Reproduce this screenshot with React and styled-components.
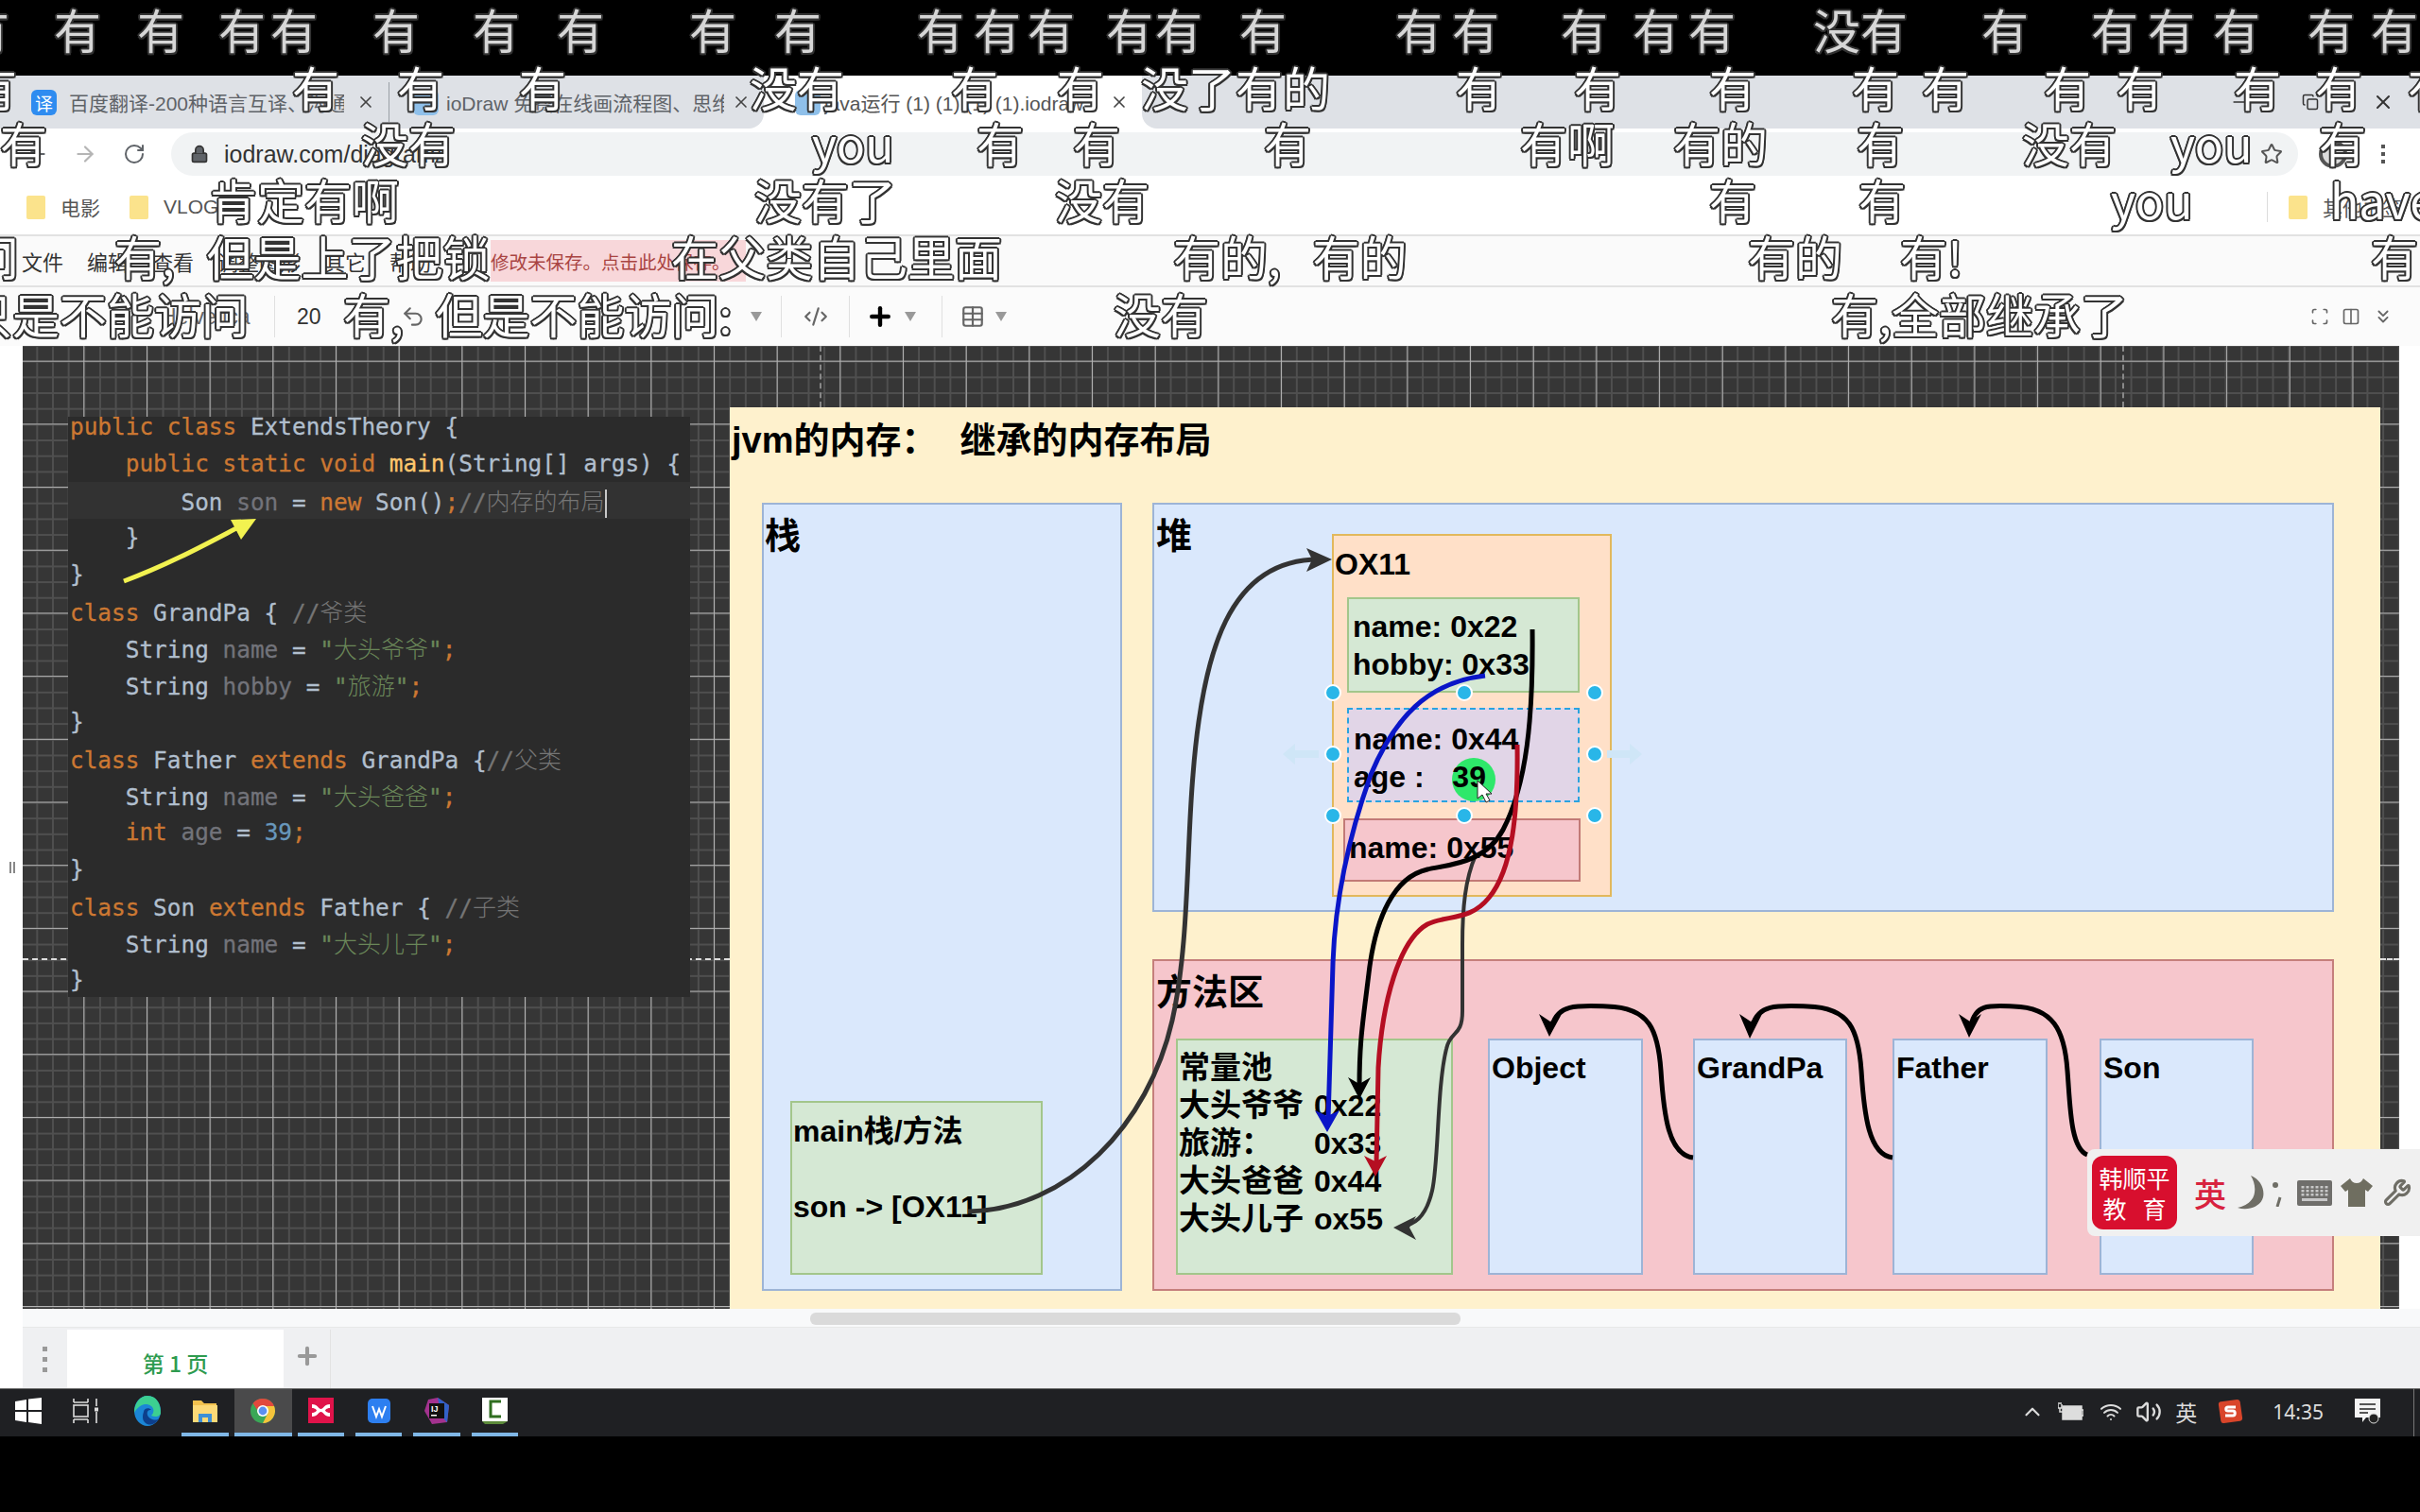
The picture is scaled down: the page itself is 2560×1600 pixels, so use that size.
import React from "react";
import styled, { createGlobalStyle } from "styled-components";
import {
	ArrowLeft,
	ArrowRight,
	RotateCw,
	Lock,
	Star,
	X,
	Minus,
	Copy,
	Undo2,
	CodeXml,
	Plus,
	Table,
	Columns2,
	ChevronsDown,
	ChevronUp,
	Scan,
	Volume2,
	Wifi,
	Wrench,
} from "lucide-react";

const CJK = '"Noto Sans CJK SC", sans-serif';
const UI = '"Liberation Sans", "Noto Sans CJK SC", sans-serif';

const GlobalStyle = createGlobalStyle`
	html, body {
		margin: 0;
		padding: 0;
		background: #000;
		overflow: hidden;
	}
	* { box-sizing: border-box; }
`;

const Screen = styled.div`
	position: relative;
	width: 2560px;
	height: 1600px;
	display: flex;
	flex-direction: column;
	overflow: hidden;
	font-family: ${UI};
	background: #000;
`;

const BlackBand = styled.div`
	height: ${(p) => p.$h}px;
	flex: none;
	background: #000;
`;

/* browser chrome */
const TabStrip = styled.div`
	height: 56px;
	flex: none;
	display: flex;
	background: #fff;
`;

const TabGroup = styled.div`
	display: flex;
	align-items: center;
	background: #dee1e6;
	border-bottom-left-radius: ${(p) => (p.$after ? 16 : 0)}px;
	border-bottom-right-radius: ${(p) => (p.$before ? 16 : 0)}px;
	flex: ${(p) => (p.$after ? 1 : "none")};
	justify-content: ${(p) => (p.$after ? "flex-end" : "flex-start")};
	padding-left: ${(p) => (p.$before ? 24 : 0)}px;
`;

const BrowserTab = styled.div`
	width: ${(p) => p.$w}px;
	height: 42px;
	display: flex;
	align-items: center;
	padding-left: ${(p) => p.$pl}px;
	gap: ${(p) => p.$gap}px;
	font-size: 21px;
	color: #5f6368;
	white-space: nowrap;
	border-right: ${(p) => (p.$sep ? "1px solid #9aa0a6" : "none")};
	flex: none;
`;

const ActiveTab = styled(BrowserTab)`
	height: 56px;
	background: #fff;
	color: #555;
`;

const TabTitle = styled.span`
	flex: 1;
	overflow: hidden;
`;

const TabClose = styled.span`
	display: flex;
	color: #444;
	margin-right: 14px;
`;

const Favicon = styled.span`
	width: 27px;
	height: 27px;
	flex: none;
	border-radius: 6px;
	background: ${(p) => p.$bg};
	color: #fff;
	font-size: 19px;
	display: flex;
	align-items: center;
	justify-content: center;
`;

const WindowControls = styled.div`
	display: flex;
	align-items: center;
	gap: 56px;
	padding-right: 27px;
	color: #333;
`;

const AddressRow = styled.div`
	height: 54px;
	flex: none;
	display: flex;
	align-items: center;
	background: #fff;
	color: #5f6368;
	padding-left: 26px;
`;

const NavIcon = styled.span`
	display: flex;
	margin-left: ${(p) => p.$ml}px;
`;

const Omnibox = styled.div`
	width: 2250px;
	height: 46px;
	margin-left: 27px;
	border-radius: 23px;
	background: #f1f3f4;
	display: flex;
	align-items: center;
	padding-left: 20px;
	padding-right: 16px;
	font-size: 25px;
	color: #333;
`;

const Url = styled.span`
	margin-left: 16px;
	flex: 1;
`;

const Avatar = styled.span`
	width: 30px;
	height: 30px;
	border-radius: 50%;
	margin-left: 22px;
	border: 4px solid #555;
	background: #ddd;
	flex: none;
`;

const DotsV = styled.span`
	margin-left: 36px;
	display: flex;
	flex-direction: column;
	gap: 4px;
	i {
		width: 4px;
		height: 4px;
		background: #555;
		display: block;
	}
`;

const BookmarkRow = styled.div`
	height: 58px;
	flex: none;
	display: flex;
	align-items: center;
	background: #fff;
	font-size: 21px;
	color: #555;
`;

const Bookmark = styled.div`
	display: flex;
	align-items: center;
	gap: 16px;
	margin-left: ${(p) => p.$ml}px;
`;

const FolderMark = styled.span`
	width: 20px;
	height: 25px;
	border-radius: 2px;
	background: #fbe38c;
	display: block;
`;

const BookmarkEnd = styled.div`
	margin-left: auto;
	display: flex;
	align-items: center;
	gap: 16px;
	border-left: 1px solid #ddd;
	padding-left: 22px;
	width: 162px;
	height: 32px;
`;

/* editor */
const MenuBar = styled.div`
	height: 56px;
	flex: none;
	display: flex;
	align-items: center;
	gap: 25px;
	padding-left: 23px;
	background: #fafafa;
	border-top: 2px solid #e2e2e2;
	border-bottom: 2px solid #e2e2e2;
	font-size: 22px;
	color: #333;
`;

const Notice = styled.div`
	margin-left: 38px;
	width: 270px;
	height: 44px;
	display: flex;
	align-items: center;
	background: #f8d7da;
	color: #a94442;
	font-size: 19.5px;
	white-space: nowrap;
	overflow: hidden;
`;

const Toolbar = styled.div`
	height: 62px;
	flex: none;
	display: flex;
	align-items: center;
	background: #fbfbfb;
	color: #666;
	font-size: 23px;
`;

const ToolItem = styled.span`
	display: flex;
	align-items: center;
	width: ${(p) => (p.$w ? `${p.$w}px` : "auto")};
	margin-left: ${(p) => p.$ml}px;
	color: ${(p) => p.$c || "#666"};
	overflow: hidden;
`;

const ToolSep = styled.span`
	width: 1px;
	height: 44px;
	background: #e0e0e0;
	margin-left: ${(p) => p.$ml}px;
`;

const Caret = styled.span`
	width: 0;
	height: 0;
	margin-left: ${(p) => p.$ml}px;
	border-left: 6px solid transparent;
	border-right: 6px solid transparent;
	border-top: 10px solid #999;
`;

const ToolRight = styled.div`
	margin-left: auto;
	display: flex;
	align-items: center;
	gap: 13px;
	padding-right: 28px;
	color: #666;
`;

const EditorRow = styled.div`
	flex: none;
	height: 1103px;
	display: flex;
	background: #fff;
`;

const LeftStrip = styled.div`
	width: 24px;
	flex: none;
	background: #fff;
	position: relative;
`;

const Grip = styled.span`
	position: absolute;
	left: 10px;
	top: 546px;
	width: 6px;
	height: 12px;
	border-left: 2px solid #888;
	border-right: 2px solid #888;
`;

const EditorMain = styled.div`
	flex: 1;
	display: flex;
	flex-direction: column;
`;

const CanvasRow = styled.div`
	position: relative;
	height: 1019px;
	flex: none;
	display: flex;
	background: #fff;
`;

const Canvas = styled.div`
	position: relative;
	width: 2514px;
	flex: none;
	overflow: hidden;
	background-color: #363636;
	background-image: linear-gradient(to right, #b4b4b4 1px, transparent 1px),
		linear-gradient(to bottom, #b4b4b4 1px, transparent 1px),
		linear-gradient(to right, #4f4f4f 2px, transparent 2px),
		linear-gradient(to bottom, #4f4f4f 2px, transparent 2px);
	background-size: 66.68px 100%, 100% 66.7px, 16.67px 100%, 100% 16.675px;
	background-position: 64.3px 0, 0 15.7px, 64.3px 0, 0 15.7px;
`;

const PageBreakH = styled.div`
	position: absolute;
	left: ${(p) => p.$x}px;
	top: 648px;
	width: ${(p) => p.$w}px;
	border-top: 2px dashed #ddd;
`;

const PageBreakV = styled.div`
	position: absolute;
	left: ${(p) => p.$x}px;
	top: 0;
	height: 65px;
	border-left: 2px dashed #888;
`;

/* code picture */
const CodePanel = styled.div`
	position: absolute;
	left: 48px;
	top: 75px;
	width: 658px;
	height: 614px;
	background: #2b2b2b;
	overflow: hidden;
	font-family: "DejaVu Sans Mono", "Noto Sans CJK SC", monospace;
	font-size: 24.4px;
	color: #b1bfce;
	-webkit-text-stroke: 0.3px;
`;

const CodeLines = styled.div`
	margin-top: -9px;
`;

const CodeLine = styled.div`
	height: 39px;
	line-height: 39px;
	white-space: pre;
	padding-left: 2px;
	background: ${(p) => (p.$current ? "#323232" : "transparent")};
`;

const Kw = styled.span`
	color: #cc7832;
`;
const Fn = styled.span`
	color: #ffc66d;
`;
const Var = styled.span`
	color: #72737a;
`;
const Str = styled.span`
	color: #6a8759;
`;
const Num = styled.span`
	color: #6897bb;
`;
const Cmt = styled.span`
	color: #757575;
`;
const Cn = styled.span`
	font-family: ${CJK};
	font-size: 25px;
	font-weight: 300;
	-webkit-text-stroke: 0;
`;
const TextCaret = styled.span`
	display: inline-block;
	width: 2px;
	height: 30px;
	background: #c8c8c8;
	vertical-align: middle;
`;

/* diagram */
const DiagramPage = styled.div`
	position: absolute;
	left: 748px;
	top: 65px;
	width: 1746px;
	height: 954px;
	background: #fef1cd;
	padding: 12px 2px;
	color: #000;
	font-family: ${UI};
	font-weight: 700;
`;

const PageTitle = styled.div`
	font-size: 38px;
	line-height: 46px;
	white-space: pre;
	word-spacing: 1.5px;
`;

const TONES = {
	blue: ["#dae8fc", "#9db4d6"],
	pink: ["#f6c6cc", "#c57f7c"],
	green: ["#d5e8d4", "#a3c68b"],
	peach: ["#ffe0c8", "#e2b85c"],
	purple: ["#e1d5e7", "#29a3e0"],
	red: ["#f6c6cc", "#c27a77"],
};

const Node = styled.div`
	position: absolute;
	left: ${(p) => p.$x}px;
	top: ${(p) => p.$y}px;
	width: ${(p) => p.$w}px;
	height: ${(p) => p.$h}px;
	background: ${(p) => TONES[p.$tone][0]};
	border: 2px ${(p) => (p.$dashed ? "dashed" : "solid")} ${(p) => TONES[p.$tone][1]};
	padding: ${(p) => p.$pt || 0}px 0 0 ${(p) => p.$pl || 0}px;
	font-size: 32px;
	line-height: 40px;
	white-space: pre;
`;

const AreaLabel = styled.div`
	font-size: 38px;
	line-height: 46px;
`;

const PoolRow = styled.div`
	display: flex;
	height: 40px;
`;

const PoolLabel = styled.span`
	width: 143px;
	font-size: 33px;
	flex: none;
`;

const Ping = styled.span`
	position: absolute;
	left: 109px;
	top: 51px;
	width: 46px;
	height: 46px;
	border-radius: 50%;
	background: #2ee86a;
`;

const NodeText = styled.div`
	position: relative;
`;

const AgeValue = styled.span`
	margin-left: 3px;
`;

const Overlay = styled.svg`
	position: absolute;
	left: 0;
	top: 0;
	width: 2514px;
	height: 1019px;
	pointer-events: none;
`;

/* input method floating bar */
const ImeBar = styled.div`
	position: absolute;
	left: 2184px;
	top: 850px;
	width: 352px;
	height: 92px;
	background: #f0f0f0;
	border-radius: 8px 0 0 8px;
	display: flex;
	align-items: center;
	padding-left: 5px;
	color: #6f6e66;
`;

const ImeLogo = styled.div`
	width: 90px;
	height: 78px;
	border-radius: 12px;
	background: #d80f2e;
	color: #fff;
	font-family: ${CJK};
	font-size: 25px;
	line-height: 32px;
	text-align: center;
	padding-top: 7px;
	flex: none;
	white-space: pre;
`;

const ImeLang = styled.span`
	color: #d8233f;
	font-family: ${CJK};
	font-size: 34px;
	font-weight: 500;
	margin-left: 18px;
`;

const ImeIcon = styled.span`
	display: flex;
	margin-left: ${(p) => p.$ml}px;
`;

const RightStrip = styled.div`
	flex: 1;
	background: #fff;
`;

const ScrollRow = styled.div`
	height: 20px;
	flex: none;
	background: #f8f9fa;
	padding: 4px 0 0 833px;
	border-bottom: 1px solid #e8e8e8;
`;

const ScrollThumb = styled.div`
	width: 688px;
	height: 13px;
	background: #dadada;
	border-radius: 6px;
`;

const PageTabs = styled.div`
	height: 64px;
	flex: none;
	display: flex;
	background: #eff0f2;
	padding-top: 2px;
`;

const PageDots = styled.div`
	width: 47px;
	display: flex;
	flex-direction: column;
	align-items: center;
	justify-content: center;
	gap: 6px;
	i {
		width: 5px;
		height: 5px;
		background: #999;
		display: block;
	}
`;

const PageTab = styled.div`
	width: 229px;
	background: #fff;
	color: #2e9b4f;
	font-family: ${CJK};
	font-size: 23px;
	font-weight: 500;
	display: flex;
	align-items: center;
	justify-content: center;
	padding-top: 8px;
`;

const PageAdd = styled.div`
	width: 50px;
	color: #999;
	display: flex;
	justify-content: center;
	padding-top: 14px;
	border-right: 1px solid #e3e3e3;
`;

/* taskbar */
const TaskBar = styled.div`
	height: 51px;
	flex: none;
	display: flex;
	background: #1f2023;
	border-top: 1px solid #6b6b6b;
	color: #e6e6e6;
`;

const TaskSlot = styled.div`
	position: relative;
	width: ${(p) => p.$w || 61.3}px;
	margin-left: ${(p) => p.$ml || 0}px;
	flex: none;
	display: flex;
	align-items: center;
	justify-content: center;
	padding-bottom: 5px;
	background: ${(p) => (p.$active ? "#4a4a4b" : "transparent")};
	&::after {
		content: "";
		display: ${(p) => (p.$open ? "block" : "none")};
		position: absolute;
		bottom: 0;
		left: ${(p) => (p.$active ? 0 : 6)}px;
		right: ${(p) => (p.$active ? 0 : 6)}px;
		height: 4px;
		background: #7fb7e6;
	}
`;

const Tray = styled.div`
	margin-left: auto;
	display: flex;
	align-items: center;
	padding-right: 41px;
	padding-bottom: 3px;
	border-right: 1px solid transparent;
`;

const TrayItem = styled.span`
	display: flex;
	margin-left: ${(p) => p.$ml}px;
	font-size: ${(p) => p.$fs || 22}px;
	font-family: ${(p) => (p.$cn ? CJK : '"Noto Sans", sans-serif')};
	color: #dcdcdc;
`;

const TrayEdge = styled.span`
	position: absolute;
	left: 2553px;
	top: 1469px;
	width: 1px;
	height: 51px;
	background: #777;
`;

/* bullet comments, over everything */
const Danmaku = styled.span`
	position: absolute;
	left: ${(p) => p.$x}px;
	top: ${(p) => p.$y - 32}px;
	font-family: ${CJK};
	font-size: 50px;
	line-height: 58px;
	white-space: pre;
	color: ${(p) => (p.$y < 60 ? "#d6d6d6" : "#fff")};
	text-shadow: -2px 0 0 #333, 2px 0 0 #333, 0 -2px 0 #333, 0 2px 0 #333, -1.5px -1.5px 0 #333,
		1.5px -1.5px 0 #333, -1.5px 1.5px 0 #333, 1.5px 1.5px 0 #333;
`;

const has = "有";
const DANMAKU = [
	[33, [[-40, has], [57, has], [145, has], [231, has], [286, has], [394, has], [500, has], [589, has], [729, has], [819, has], [970, has], [1030, has], [1087, has], [1170, has], [1222, has], [1311, has], [1476, has], [1536, has], [1651, has], [1727, has], [1786, has], [1918, "没有"], [2096, has], [2212, has], [2272, has], [2341, has], [2441, has], [2508, has]]],
	[94, [[-32, has], [309, has], [420, has], [549, has], [793, "没有"], [1006, has], [1118, has], [1207, "没了有的"], [1540, has], [1665, has], [1808, has], [1959, has], [2033, has], [2162, has], [2239, has], [2363, has], [2449, has], [2547, has]]],
	[153, [[0, has], [382, "没有"], [859, "you"], [1033, has], [1135, has], [1337, has], [1608, "有啊"], [1770, "有的"], [1964, has], [2139, "没有"], [2296, "you"], [2453, has]]],
	[213, [[222, "肯定有啊"], [798, "没有了"], [1116, "没有"], [1808, has], [1966, has], [2233, "you"], [2465, "have"]]],
	[273, [[-30, "问"], [121, "有,   但是上了把锁"], [710, "在父类自己里面"], [1241, "有的,   有的"], [1849, "有的"], [2010, "有!"], [2508, has]]],
	[334, [[-37, "只是不能访问"], [363, "有,   但是不能访问:"], [1178, "没有"], [1937, "有,全部继承了"]]],
];

const Arrowhead = ({ points, fill }) => <polygon points={points} fill={fill} />;

const WindowsLogo = () => (
	<svg width='28' height='28' viewBox='0 0 28 28'>
		<polygon points='0,4 12,2 12,13 0,13' fill='#fff' />
		<polygon points='14,1.6 28,0 28,13 14,13' fill='#fff' />
		<polygon points='0,15 12,15 12,26 0,24' fill='#fff' />
		<polygon points='14,15 28,15 28,28 14,26' fill='#fff' />
	</svg>
);

const TaskViewIcon = () => (
	<svg width='28' height='28' viewBox='0 0 28 28' fill='none' stroke='#ddd' strokeWidth='1.6'>
		<rect x='2' y='8' width='15' height='12' />
		<path d='M2 5V1M17 5V1M2 5H17M2 23H17M2 27V23M17 27V23M26 1V9M26 15V27' />
		<rect x='24' y='10.5' width='4' height='4' fill='#ddd' stroke='none' />
	</svg>
);

const EdgeIcon = () => (
	<svg width='28' height='32' viewBox='0 0 28 32'>
		<ellipse cx='14' cy='16' rx='14' ry='16' fill='#1b86d6' />
		<path d='M14 0C24 0 28 9 28 18C28 22 22 23 18 21C24 15 18 8 11 9C6 10 2 14 0 18C0 8 6 0 14 0Z' fill='#3ccf91' />
		<path d='M10 17C10 13 16 12 18 15C13 14 12 21 17 24C21 26 24 26 26 24C23 30 16 33 11 28C8 25 9 20 10 17Z' fill='#0d3f8c' />
	</svg>
);

const ExplorerIcon = () => (
	<svg width='26' height='26' viewBox='0 0 26 26'>
		<path d='M0 2H9L12 5H25V8H0Z' fill='#f2c14e' />
		<rect x='0' y='7' width='26' height='18' fill='#fcd977' />
		<path d='M6 25V16H20V25H16V20H10V25Z' fill='#3d8fd6' />
	</svg>
);

const ChromeIcon = () => (
	<svg width='26' height='28' viewBox='0 0 26 28'>
		<circle cx='13' cy='14' r='13' fill='#3aa757' />
		<path d='M13 1A13 13 0 0 1 25 9H13A6 6 0 0 0 7 13L2.6 6A13 13 0 0 1 13 1Z' fill='#e2483d' />
		<path d='M25 9A13 13 0 0 1 13 27L18 17A6 6 0 0 0 13 9Z' fill='#f5c33b' />
		<circle cx='13' cy='14' r='6' fill='#fff' />
		<circle cx='13' cy='14' r='4.4' fill='#5b8ff0' />
	</svg>
);

const XmindIcon = () => (
	<svg width='27' height='27' viewBox='0 0 27 27'>
		<rect width='27' height='27' fill='#e0134a' />
		<path d='M4 7C10 7 11 12 13.5 12C16 12 17 7 23 7V11C19 11 18 13.5 18 13.5C18 13.5 19 16 23 16V20C17 20 16 15 13.5 15C11 15 10 20 4 20V16C8 16 9 13.5 9 13.5C9 13.5 8 11 4 11Z' fill='#fff' />
	</svg>
);

const WpsIcon = () => (
	<svg width='24' height='26' viewBox='0 0 24 26'>
		<rect width='24' height='26' rx='5' fill='#2d7ff0' />
		<path d='M5 8L9 19L12 11L15 19L19 8' fill='none' stroke='#fff' strokeWidth='2' />
	</svg>
);

const IdeaIcon = () => (
	<svg width='26' height='28' viewBox='0 0 26 28'>
		<polygon points='4,2 14,0 26,8 24,26 8,28 0,14' fill='#a3328f' />
		<polygon points='14,0 26,8 24,26 18,20' fill='#3162c9' />
		<rect x='5' y='6' width='16' height='16' fill='#111' />
		<text x='7' y='15' fontSize='9' fontFamily='"Liberation Sans"' fontWeight='700' fill='#fff'>
			IJ
		</text>
		<rect x='7' y='18' width='6' height='1.5' fill='#fff' />
	</svg>
);

const CamtasiaIcon = () => (
	<svg width='27' height='28' viewBox='0 0 27 28'>
		<rect width='27' height='25' fill='#fff' />
		<polygon points='0,25 27,25 22,28 3,28' fill='#5c8a3a' />
		<path d='M20 4H9V20H20' fill='none' stroke='#2f6e20' strokeWidth='3' />
	</svg>
);

const BatteryIcon = () => (
	<svg width='27' height='20' viewBox='0 0 27 20' fill='none' stroke='#ddd' strokeWidth='1.5'>
		<rect x='5' y='4' width='20' height='14' fill='#ddd' />
		<path d='M25 8H27V14H25M0 2V6H4V2M2 6V10H5M1 2V0M3 2V0' />
	</svg>
);

const NoticeIcon = () => (
	<svg width='27' height='27' viewBox='0 0 27 27'>
		<path d='M0 0H27V20H12L8 25V20H0Z' fill='#f4f4f4' />
		<path d='M5 6H22M5 11H22M5 15H14' stroke='#222' strokeWidth='1.5' />
		<circle cx='20' cy='21' r='5' fill='#222' stroke='#ddd' />
	</svg>
);

const SogouIcon = () => (
	<svg width='27' height='27' viewBox='0 0 27 27'>
		<rect x='2' y='2' width='23' height='23' rx='3' fill='#d9452a' transform='rotate(-8 13.5 13.5)' />
		<path d='M19 9H11C8 9 8 13 11 13H16C19 13 19 18 16 18H8' fill='none' stroke='#fff' strokeWidth='3' />
	</svg>
);

const ImeMoon = () => (
	<svg width='28' height='36' viewBox='0 0 28 36'>
		<path d='M14 0C24 4 29 14 27 23C25 32 12 38 0 34C10 32 17 26 18 18C19 11 17 5 14 0Z' fill='#6f6e66' />
	</svg>
);

const ImePunct = () => (
	<svg width='10' height='30' viewBox='0 0 10 30'>
		<circle cx='3' cy='7' r='3' fill='#6f6e66' />
		<path d='M8 20L5 30' stroke='#6f6e66' strokeWidth='3' />
	</svg>
);

const ImeKeyboard = () => (
	<svg width='37' height='27' viewBox='0 0 37 27'>
		<rect width='37' height='27' rx='2' fill='#6f6e6b' />
		{[6, 10, 14].map((y) =>
			[6, 11, 16, 21, 26, 31].map((x) => <rect key={`${x}-${y}`} x={x - 1.5} y={y} width='3' height='2.5' fill='#c8c8c8' />)
		)}
		<rect x='5' y='19' width='27' height='3' fill='#c8c8c8' />
	</svg>
);

const ImeShirt = () => (
	<svg width='34' height='30' viewBox='0 0 34 30'>
		<path d='M10 0C11 3 14 5 17 5C20 5 23 3 24 0L34 8L29 14L26 12V30H8V12L5 14L0 8Z' fill='#6f6e60' />
	</svg>
);

const DiagramArrows = () => (
	<Overlay viewBox='24 366 2514 1019'>
		{/* yellow pointer on the code */}
		<path d='M131 615C180 597 225 572 256 556' fill='none' stroke='#f2f250' strokeWidth='5' />
		<Arrowhead points='271,549 244,550 255,571' fill='#f2f250' />

		{/* son -> OX11 */}
		<path d='M1024 1282C1130 1280 1215 1190 1240 1080C1258 1000 1255 900 1262 820C1272 690 1300 592 1395 592' fill='none' stroke='#333' strokeWidth='5' />
		<Arrowhead points='1409,592 1382,580 1388,592 1382,605' fill='#333' />

		{/* grey line to ox55 */}
		<path d='M1561 905C1550 930 1547 960 1547 1000L1547 1070C1547 1098 1534 1090 1530 1110C1520 1150 1522 1230 1515 1260C1508 1290 1495 1296 1482 1298' fill='none' stroke='#333' strokeWidth='4' />
		<Arrowhead points='1474,1299 1498,1287 1491,1299 1498,1312' fill='#333' />

		{/* black line to 0x22 */}
		<path d='M1621 666C1622 760 1615 830 1590 878C1570 915 1530 915 1510 920C1475 928 1455 970 1448 1030C1442 1080 1438 1100 1438 1150' fill='none' stroke='#000' strokeWidth='5' />
		<Arrowhead points='1438,1163 1426,1140 1438,1147 1450,1140' fill='#000' />

		{/* red line to 0x44 */}
		<path d='M1605 788C1606 860 1600 920 1575 950C1555 975 1530 968 1510 978C1480 995 1462 1060 1458 1130L1456 1232' fill='none' stroke='#b50e22' strokeWidth='5' />
		<Arrowhead points='1455,1245 1443,1223 1455,1229 1467,1223' fill='#b50e22' />

		{/* blue line to 0x33 */}
		<path d='M1571 715C1510 722 1475 760 1450 820C1425 890 1412 960 1410 1020L1405 1185' fill='none' stroke='#0a16c8' strokeWidth='5' />
		<Arrowhead points='1404,1198 1391,1175 1404,1181 1417,1175' fill='#0a16c8' />

		{/* inheritance chain */}
		<path d='M1791 1225C1765 1222 1760 1180 1757 1133C1754 1090 1745 1066 1700 1065C1670 1064 1648 1062 1642 1085' fill='none' stroke='#000' strokeWidth='5' />
		<Arrowhead points='1639,1097 1628,1073 1640,1081 1652,1073' fill='#000' />
		<path d='M2002 1225C1977 1222 1972 1180 1969 1133C1966 1090 1957 1066 1912 1065C1882 1064 1860 1062 1854 1085' fill='none' stroke='#000' strokeWidth='5' />
		<Arrowhead points='1851,1099 1840,1073 1852,1081 1864,1073' fill='#000' />
		<path d='M2208 1222C2190 1215 2190 1170 2187 1133C2184 1090 2172 1066 2130 1065C2105 1064 2090 1062 2085 1085' fill='none' stroke='#000' strokeWidth='5' />
		<Arrowhead points='2083,1098 2072,1073 2084,1081 2096,1073' fill='#000' />

		{/* selection handles */}
		{[733, 798, 863].map((cy) =>
			[1410, 1549, 1687]
				.filter((cx) => !(cy === 798 && cx === 1549))
				.map((cx) => <circle key={`${cx}-${cy}`} cx={cx} cy={cy} r='8' fill='#29b6e8' stroke='#fff' strokeWidth='2' />)
		)}
		<path d='M1357 798L1370 787V794H1395V802H1370V809Z' fill='#cfe6f7' />
		<path d='M1737 798L1724 787V794H1700V802H1724V809Z' fill='#cfe6f7' />

		{/* mouse pointer */}
		<path d='M1563 826V845L1568 841L1572 849L1576 847L1572 840H1578Z' fill='#fff' stroke='#222' strokeWidth='1' />
	</Overlay>
);

const CodeBlock = () => (
	<CodePanel>
		<CodeLines>
			<CodeLine><Kw>public class</Kw> ExtendsTheory {"{"}</CodeLine>
			<CodeLine>    <Kw>public static void</Kw> <Fn>main</Fn>(String[] args) {"{"}</CodeLine>
			<CodeLine $current>        Son <Var>son</Var> = <Kw>new</Kw> Son()<Kw>;</Kw><Cmt>//<Cn>内存的布局</Cn></Cmt><TextCaret /></CodeLine>
			<CodeLine>    {"}"}</CodeLine>
			<CodeLine>{"}"}</CodeLine>
			<CodeLine><Kw>class</Kw> GrandPa {"{"} <Cmt>//<Cn>爷类</Cn></Cmt></CodeLine>
			<CodeLine>    String <Var>name</Var> = <Str>"<Cn>大头爷爷</Cn>"</Str><Kw>;</Kw></CodeLine>
			<CodeLine>    String <Var>hobby</Var> = <Str>"<Cn>旅游</Cn>"</Str><Kw>;</Kw></CodeLine>
			<CodeLine>{"}"}</CodeLine>
			<CodeLine><Kw>class</Kw> Father <Kw>extends</Kw> GrandPa {"{"}<Cmt>//<Cn>父类</Cn></Cmt></CodeLine>
			<CodeLine>    String <Var>name</Var> = <Str>"<Cn>大头爸爸</Cn>"</Str><Kw>;</Kw></CodeLine>
			<CodeLine>    <Kw>int</Kw> <Var>age</Var> = <Num>39</Num><Kw>;</Kw></CodeLine>
			<CodeLine>{"}"}</CodeLine>
			<CodeLine><Kw>class</Kw> Son <Kw>extends</Kw> Father {"{"} <Cmt>//<Cn>子类</Cn></Cmt></CodeLine>
			<CodeLine>    String <Var>name</Var> = <Str>"<Cn>大头儿子</Cn>"</Str><Kw>;</Kw></CodeLine>
			<CodeLine>{"}"}</CodeLine>
		</CodeLines>
	</CodePanel>
);

const Diagram = () => (
	<DiagramPage>
		<PageTitle>jvm的内存：  继承的内存布局</PageTitle>

		<Node $x={34} $y={101} $w={381} $h={834} $tone='blue' $pl={1} $pt={10}>
			<AreaLabel>栈</AreaLabel>
		</Node>
		<Node $x={64} $y={734} $w={267} $h={184} $tone='green' $pl={1} $pt={10}>
			{"main栈/方法\n\nson -> [OX11]"}
		</Node>

		<Node $x={447} $y={101} $w={1250} $h={433} $tone='blue' $pl={2} $pt={10}>
			<AreaLabel>堆</AreaLabel>
		</Node>
		<Node $x={637} $y={134} $w={296} $h={384} $tone='peach' $pl={1} $pt={10}>
			OX11
		</Node>
		<Node $x={653} $y={201} $w={246} $h={101} $tone='green' $pl={4} $pt={9}>
			{"name: 0x22\nhobby: 0x33"}
		</Node>
		<Node $x={653} $y={318} $w={246} $h={100} $tone='purple' $dashed $pl={5} $pt={11}>
			<Ping />
			<NodeText>
				{"name: 0x44\nage :   "}
				<AgeValue>39</AgeValue>
			</NodeText>
		</Node>
		<Node $x={649} $y={435} $w={251} $h={67} $tone='red' $pl={4} $pt={9}>
			name: 0x55
		</Node>

		<Node $x={447} $y={584} $w={1250} $h={351} $tone='pink' $pl={2} $pt={10}>
			<AreaLabel>方法区</AreaLabel>
		</Node>
		<Node $x={472} $y={668} $w={293} $h={250} $tone='green' $pl={1} $pt={9}>
			<PoolRow><PoolLabel>常量池</PoolLabel></PoolRow>
			<PoolRow><PoolLabel>大头爷爷</PoolLabel>0x22</PoolRow>
			<PoolRow><PoolLabel>旅游：</PoolLabel>0x33</PoolRow>
			<PoolRow><PoolLabel>大头爸爸</PoolLabel>0x44</PoolRow>
			<PoolRow><PoolLabel>大头儿子</PoolLabel>ox55</PoolRow>
		</Node>
		<Node $x={802} $y={668} $w={164} $h={250} $tone='blue' $pl={2} $pt={9}>Object</Node>
		<Node $x={1019} $y={668} $w={163} $h={250} $tone='blue' $pl={2} $pt={9}>GrandPa</Node>
		<Node $x={1230} $y={668} $w={164} $h={250} $tone='blue' $pl={2} $pt={9}>Father</Node>
		<Node $x={1449} $y={668} $w={163} $h={250} $tone='blue' $pl={2} $pt={9}>Son</Node>
	</DiagramPage>
);

export default function App() {
	return (
		<Screen>
			<GlobalStyle />
			<BlackBand $h={80} />

			<TabStrip>
				<TabGroup $before>
					<BrowserTab $w={388} $sep $pl={9} $gap={13}>
						<Favicon $bg='#2f8cf0'>译</Favicon>
						<TabTitle>百度翻译-200种语言互译、沟通全世界</TabTitle>
						<TabClose><X size={20} /></TabClose>
					</BrowserTab>
					<BrowserTab $w={396} $pl={25} $gap={8}>
						<Favicon $bg='#8fc0ea' />
						<TabTitle>ioDraw 免费在线画流程图、思维导图</TabTitle>
						<TabClose><X size={20} /></TabClose>
					</BrowserTab>
				</TabGroup>
				<ActiveTab $w={400} $pl={33} $gap={4}>
					<Favicon $bg='#8fc0ea' />
					<TabTitle>java运行 (1) (1) (1) (1).iodraw</TabTitle>
					<TabClose><X size={20} /></TabClose>
				</ActiveTab>
				<TabGroup $after>
					<WindowControls>
						<Minus size={20} />
						<Copy size={18} />
						<X size={24} />
					</WindowControls>
				</TabGroup>
			</TabStrip>

			<AddressRow>
				<ArrowLeft size={26} />
				<NavIcon $ml={25}><ArrowRight size={26} color='#b5b5b5' /></NavIcon>
				<NavIcon $ml={27}><RotateCw size={24} /></NavIcon>
				<Omnibox>
					<Lock size={20} fill='#5f6368' />
					<Url>iodraw.com/diagram/</Url>
					<Star size={24} color='#555' />
				</Omnibox>
				<Avatar />
				<DotsV><i /><i /><i /></DotsV>
			</AddressRow>

			<BookmarkRow>
				<Bookmark $ml={28}><FolderMark />电影</Bookmark>
				<Bookmark $ml={31}><FolderMark />VLOG</Bookmark>
				<BookmarkEnd><FolderMark />其他书签</BookmarkEnd>
			</BookmarkRow>

			<MenuBar>
				<span>文件</span>
				<span>编辑</span>
				<span>查看</span>
				<span>调整图形</span>
				<span>其它</span>
				<span>帮助</span>
				<Notice>修改未保存。点击此处保存。</Notice>
			</MenuBar>

			<Toolbar>
				<ToolItem $ml={170} $w={100}>Helvetica</ToolItem>
				<ToolSep $ml={20} />
				<ToolItem $ml={23} $w={25} $c='#333'>20</ToolItem>
				<ToolItem $ml={85}><Undo2 size={26} /></ToolItem>
				<Caret $ml={344} />
				<ToolSep $ml={20} />
				<ToolItem $ml={23}><CodeXml size={26} /></ToolItem>
				<ToolSep $ml={22} />
				<ToolItem $ml={17} $c='#000'><Plus size={30} strokeWidth={3.5} /></ToolItem>
				<Caret $ml={11} />
				<ToolSep $ml={27} />
				<ToolItem $ml={19}><Table size={26} /></ToolItem>
				<Caret $ml={11} />
				<ToolRight>
					<Scan size={20} />
					<Columns2 size={20} />
					<ChevronsDown size={22} />
				</ToolRight>
			</Toolbar>

			<EditorRow>
				<LeftStrip><Grip /></LeftStrip>
				<EditorMain>
					<CanvasRow>
						<Canvas>
							<PageBreakV $x={843} />
							<PageBreakV $x={2221} />
							<PageBreakH $x={0} $w={748} />
							<PageBreakH $x={2494} $w={20} />
							<CodeBlock />
							<Diagram />
							<DiagramArrows />
						</Canvas>
						<RightStrip />
						<ImeBar>
							<ImeLogo>{"韩顺平\n教   育"}</ImeLogo>
							<ImeLang>英</ImeLang>
							<ImeIcon $ml={12}><ImeMoon /></ImeIcon>
							<ImeIcon $ml={9}><ImePunct /></ImeIcon>
							<ImeIcon $ml={16}><ImeKeyboard /></ImeIcon>
							<ImeIcon $ml={9}><ImeShirt /></ImeIcon>
							<ImeIcon $ml={11}><Wrench size={30} strokeWidth={2.5} /></ImeIcon>
						</ImeBar>
					</CanvasRow>
					<ScrollRow><ScrollThumb /></ScrollRow>
					<PageTabs>
						<PageDots><i /><i /><i /></PageDots>
						<PageTab>第 1 页</PageTab>
						<PageAdd><Plus size={28} strokeWidth={3.5} /></PageAdd>
					</PageTabs>
				</EditorMain>
			</EditorRow>

			<TaskBar>
				<TaskSlot $w={60}><WindowsLogo /></TaskSlot>
				<TaskSlot $w={60}><TaskViewIcon /></TaskSlot>
				<TaskSlot $ml={5}><EdgeIcon /></TaskSlot>
				<TaskSlot $open><ExplorerIcon /></TaskSlot>
				<TaskSlot $open $active><ChromeIcon /></TaskSlot>
				<TaskSlot $open><XmindIcon /></TaskSlot>
				<TaskSlot $open><WpsIcon /></TaskSlot>
				<TaskSlot $open><IdeaIcon /></TaskSlot>
				<TaskSlot $open><CamtasiaIcon /></TaskSlot>
				<Tray>
					<TrayItem $ml={0}><ChevronUp size={26} /></TrayItem>
					<TrayItem $ml={14}><BatteryIcon /></TrayItem>
					<TrayItem $ml={17}><Wifi size={24} /></TrayItem>
					<TrayItem $ml={14}><Volume2 size={28} /></TrayItem>
					<TrayItem $ml={14} $cn $fs={23}>英</TrayItem>
					<TrayItem $ml={22}><SogouIcon /></TrayItem>
					<TrayItem $ml={31} $fs={21}>14:35</TrayItem>
					<TrayItem $ml={33}><NoticeIcon /></TrayItem>
				</Tray>
			</TaskBar>
			<TrayEdge />
			<BlackBand $h={80} />

			{DANMAKU.map(([y, items]) =>
				items.map(([x, text]) => (
					<Danmaku key={`${y}-${x}`} $x={x} $y={y}>
						{text}
					</Danmaku>
				))
			)}
		</Screen>
	);
}
